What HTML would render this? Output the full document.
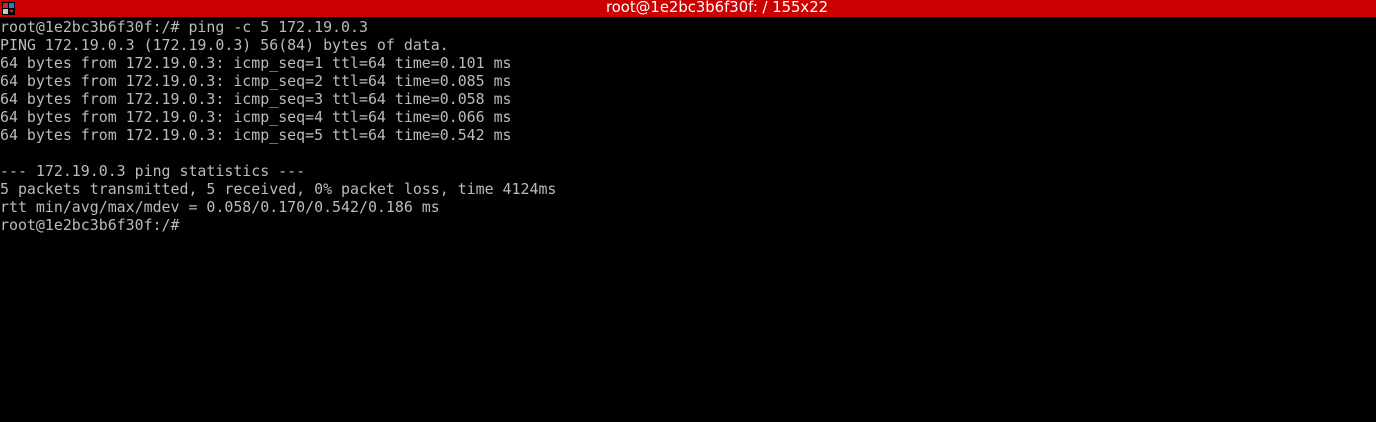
<!DOCTYPE html>
<html><head><style>
html,body{margin:0;padding:0;background:#000;width:1376px;height:422px;overflow:hidden}
#bar{position:absolute;left:0;top:0;width:1376px;height:17px;background:#cc0000;color:#fff;font:14.8px "DejaVu Sans","Liberation Sans",sans-serif;line-height:16px;text-align:center}
#ic{position:absolute;left:2px;top:2px;width:13px;height:13px}
pre{position:absolute;left:0;top:18px;margin:0;font:14.92px "DejaVu Sans Mono","Liberation Mono",monospace;line-height:18px;color:#bbbbbb;letter-spacing:0}
</style></head><body>
<div id="bar"><svg id="ic" width="13" height="13" viewBox="0 0 13 13"><rect width="13" height="13" fill="#000"/><rect x="1" y="1" width="5" height="5" fill="#e02020"/><rect x="7" y="1" width="5" height="5" fill="#2080e0"/><rect x="1" y="7" width="5" height="5" fill="#c8c8c8"/><path d="M7 8h5l-2.5 3z" fill="#e02020"/></svg><span style="position:relative;left:29px">root@1e2bc3b6f30f: / 155x22</span></div>
<pre>root@1e2bc3b6f30f:/# ping -c 5 172.19.0.3
PING 172.19.0.3 (172.19.0.3) 56(84) bytes of data.
64 bytes from 172.19.0.3: icmp_seq=1 ttl=64 time=0.101 ms
64 bytes from 172.19.0.3: icmp_seq=2 ttl=64 time=0.085 ms
64 bytes from 172.19.0.3: icmp_seq=3 ttl=64 time=0.058 ms
64 bytes from 172.19.0.3: icmp_seq=4 ttl=64 time=0.066 ms
64 bytes from 172.19.0.3: icmp_seq=5 ttl=64 time=0.542 ms

--- 172.19.0.3 ping statistics ---
5 packets transmitted, 5 received, 0% packet loss, time 4124ms
rtt min/avg/max/mdev = 0.058/0.170/0.542/0.186 ms
root@1e2bc3b6f30f:/# </pre>
</body></html>
